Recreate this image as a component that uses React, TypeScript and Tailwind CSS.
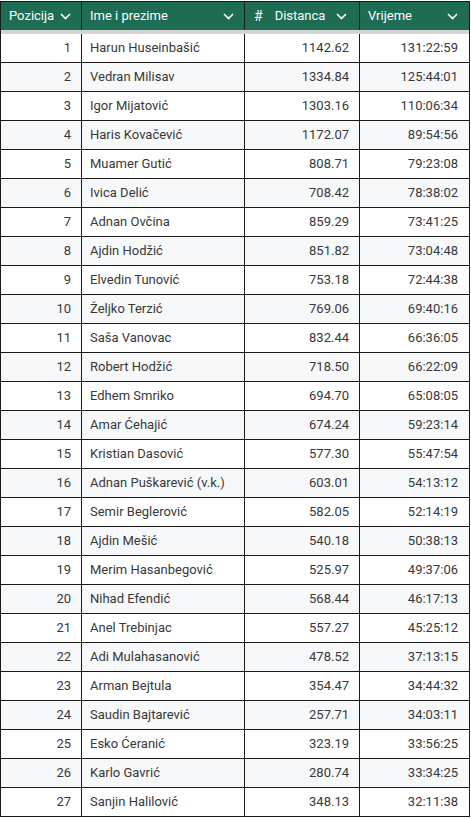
import React from "react";

const rows: [number, string, string, string][] = [
  [1, "Harun Huseinbašić", "1142.62", "131:22:59"],
  [2, "Vedran Milisav", "1334.84", "125:44:01"],
  [3, "Igor Mijatović", "1303.16", "110:06:34"],
  [4, "Haris Kovačević", "1172.07", "89:54:56"],
  [5, "Muamer Gutić", "808.71", "79:23:08"],
  [6, "Ivica Delić", "708.42", "78:38:02"],
  [7, "Adnan Ovčina", "859.29", "73:41:25"],
  [8, "Ajdin Hodžić", "851.82", "73:04:48"],
  [9, "Elvedin Tunović", "753.18", "72:44:38"],
  [10, "Željko Terzić", "769.06", "69:40:16"],
  [11, "Saša Vanovac", "832.44", "66:36:05"],
  [12, "Robert Hodžić", "718.50", "66:22:09"],
  [13, "Edhem Smriko", "694.70", "65:08:05"],
  [14, "Amar Ćehajić", "674.24", "59:23:14"],
  [15, "Kristian Dasović", "577.30", "55:47:54"],
  [16, "Adnan Puškarević (v.k.)", "603.01", "54:13:12"],
  [17, "Semir Beglerović", "582.05", "52:14:19"],
  [18, "Ajdin Mešić", "540.18", "50:38:13"],
  [19, "Merim Hasanbegović", "525.97", "49:37:06"],
  [20, "Nihad Efendić", "568.44", "46:17:13"],
  [21, "Anel Trebinjac", "557.27", "45:25:12"],
  [22, "Adi Mulahasanović", "478.52", "37:13:15"],
  [23, "Arman Bejtula", "354.47", "34:44:32"],
  [24, "Saudin Bajtarević", "257.71", "34:03:11"],
  [25, "Esko Ćeranić", "323.19", "33:56:25"],
  [26, "Karlo Gavrić", "280.74", "33:34:25"],
  [27, "Sanjin Halilović", "348.13", "32:11:38"],
];

const Chevron = () => (
  <svg width="11" height="7" viewBox="0 0 11 7" fill="none" className="shrink-0">
    <path d="M1 1l4.5 4.5L10 1" stroke="white" strokeWidth="1.6" />
  </svg>
);

const cols = "grid grid-cols-[81px_163px_115px_109px]";

export default function App() {
  return (
    <div className="w-[471px] h-[819px] bg-white overflow-hidden pt-px font-['Roboto',sans-serif]">
      <div className="w-[470px] border-l border-r border-[#1a1a1a]">
        <div className={`${cols} h-[29px] bg-[#1d6c53] text-white text-[13px] border-t border-[#1a1a1a]`}>
          <div className="flex items-center justify-between pl-[8px] pr-[10px] border-r border-[#1a1a1a]">
            <span>Pozicija</span>
            <Chevron />
          </div>
          <div className="flex items-center justify-between pl-[8px] pr-[10px] border-r border-[#1a1a1a]">
            <span>Ime i prezime</span>
            <Chevron />
          </div>
          <div className="flex items-center justify-between pl-[9px] pr-[12px] border-r border-[#1a1a1a]">
            <span className="flex items-center gap-[12px]">
              <span className="text-[14px]">#</span>
              <span>Distanca</span>
            </span>
            <Chevron />
          </div>
          <div className="flex items-center justify-between pl-[8px] pr-[11px]">
            <span>Vrijeme</span>
            <Chevron />
          </div>
        </div>
        <div className="h-[4px] bg-[#d4d4d4]" />
        {rows.map(([n, name, d, t], i) => (
          <div
            key={n}
            className={`${cols} h-[29px] text-[13px] text-[#383838] border-b border-[#1a1a1a] ${
              i % 2 === 1 ? "bg-[#f7f8fa]" : "bg-white"
            }`}
          >
            <div className="flex items-center justify-end pr-[10px] border-r border-[#1a1a1a]">{n}</div>
            <div className="flex items-center pl-[8px] border-r border-[#1a1a1a] whitespace-nowrap">{name}</div>
            <div className="flex items-center justify-end pr-[10px] border-r border-[#1a1a1a]">{d}</div>
            <div className="flex items-center justify-end pr-[11px]">{t}</div>
          </div>
        ))}
      </div>
    </div>
  );
}
